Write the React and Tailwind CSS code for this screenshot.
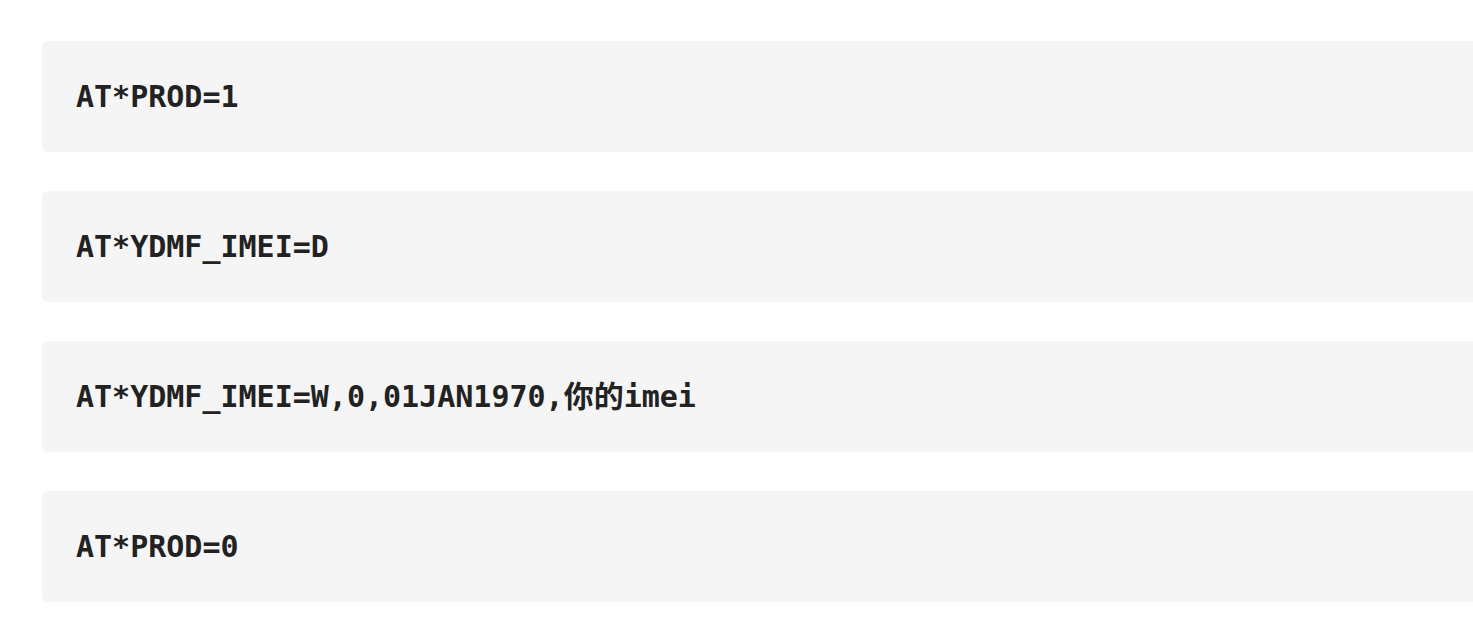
const LINES = ['AT*PROD=1', 'AT*YDMF_IMEI=D', 'AT*YDMF_IMEI=W,0,01JAN1970,你的imei', 'AT*PROD=0']

export default function App() {
  return (
    <div className="min-h-screen w-full overflow-hidden bg-white pl-[42px] pt-[41px]">
      <div className="flex flex-col gap-[39px]">
        {LINES.map((line) => (
          <pre
            key={line}
            className="w-[1480px] rounded-[6px] bg-[#f5f5f5] px-[34px] py-[33px] font-['DejaVu_Sans_Mono','Noto_Sans_CJK_SC',monospace] text-[30px] leading-[45px] font-semibold text-[#222]"
          >
            {line}
          </pre>
        ))}
      </div>
    </div>
  )
}
